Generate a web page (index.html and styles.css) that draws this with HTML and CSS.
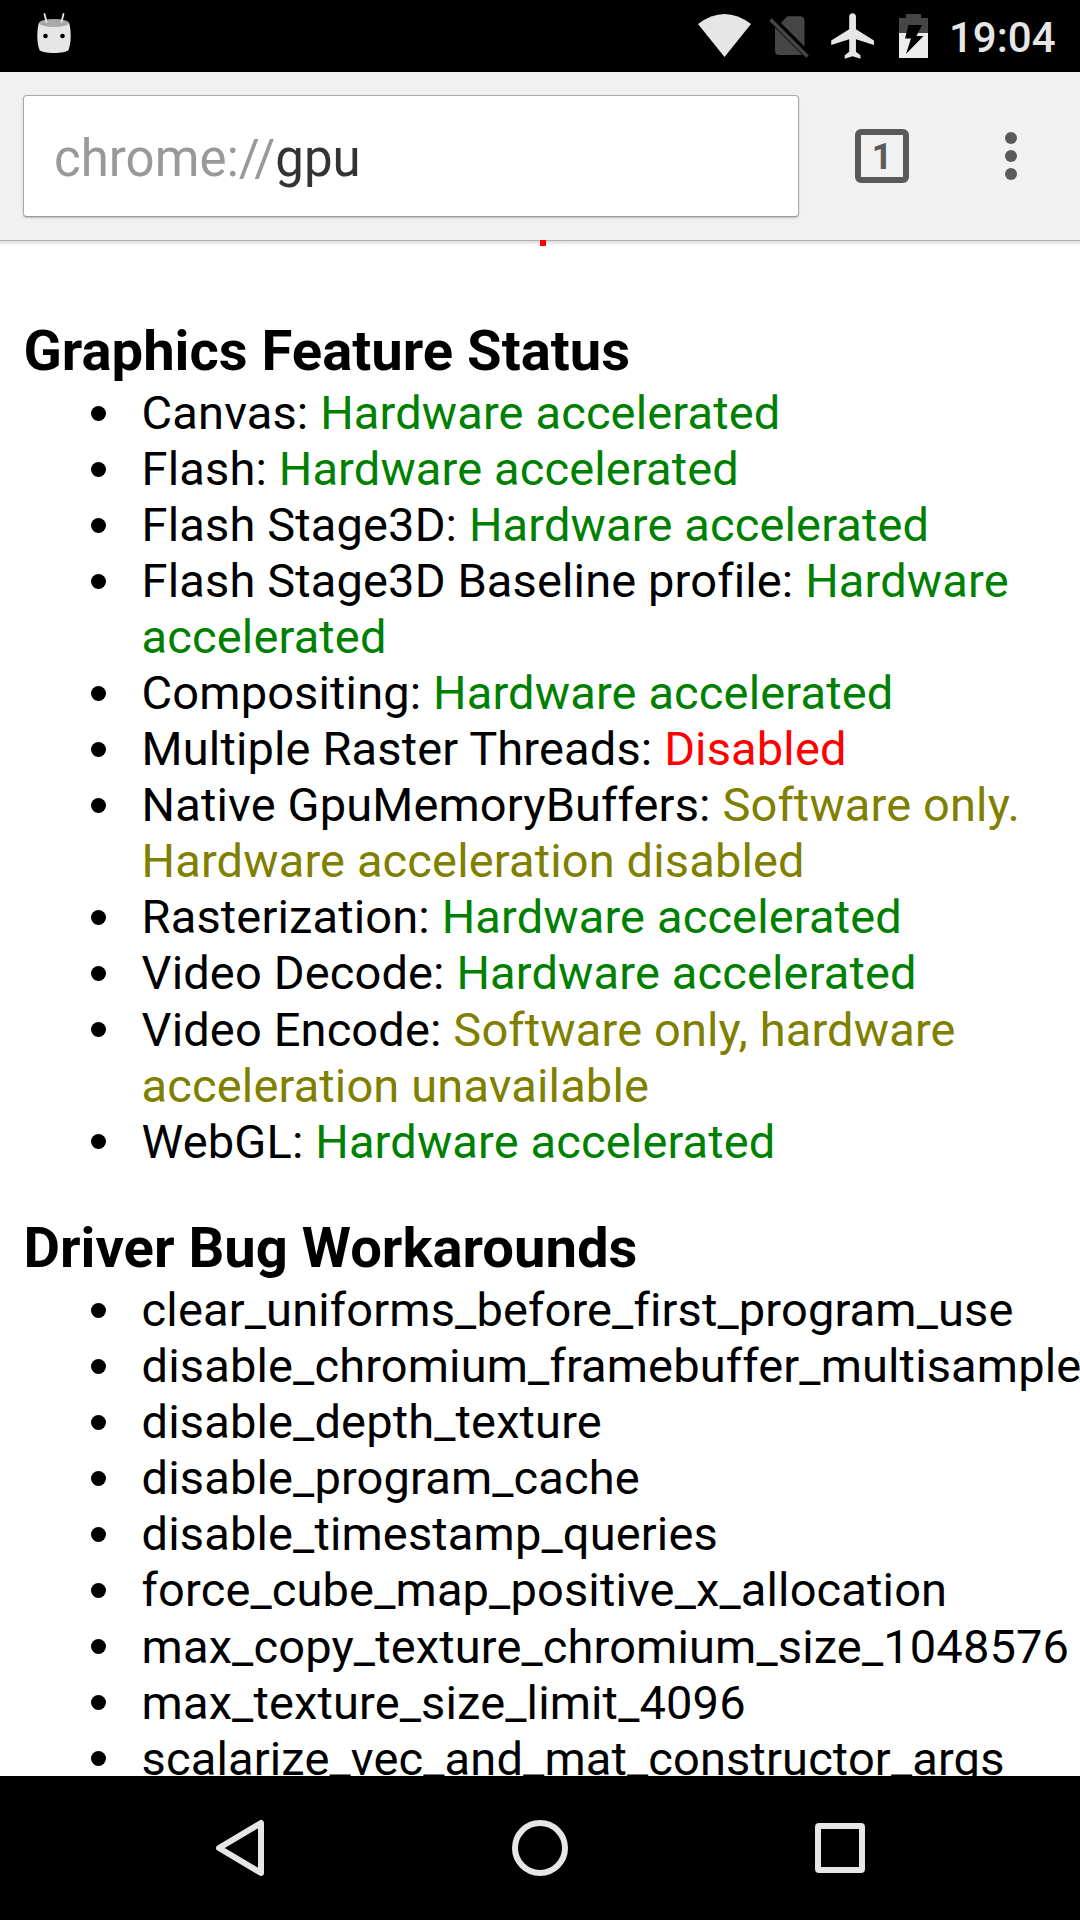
FILE: index.html
```html
<!DOCTYPE html>
<html lang="en">
<head>
<meta charset="utf-8">
<title>chrome://gpu</title>
<link rel="stylesheet" href="styles.css">
</head>
<body>
<div class="screen">
  <header class="status-bar">
    <svg class="droid" width="34" height="41" viewBox="0 0 34 41">
      <path d="M1.800 10 C-.300 18 -.300 30 2.500 37 C5 41 29 41 31.500 37 C34.300 30 34.300 18 32.200 10 Z" fill="#e6e6e6"/>
      <ellipse cx="17" cy="10" rx="15" ry="4" fill="#a8a8a8"/>
      <path d="M7.500 1 L9.500 9 M26.500 1 L24.500 9" stroke="#e6e6e6" stroke-width="1.800" stroke-linecap="round"/>
      <circle cx="8.500" cy="23" r="2.300"/><circle cx="25.500" cy="23" r="2.300"/>
    </svg>
    <svg class="system" width="268" height="72" viewBox="0 0 268 72">
      <path d="M18 24 Q44.500 4 71 24 L44.500 57 Z" fill="#e6e6e6"/>
      <path d="M101 23 L107 16.300 H120 Q124.500 16.300 124.500 21 V46.500 Z" fill="#464646"/>
      <path d="M95 27.500 L122 54.500 Q121 55 120 55 H99.500 Q95 55 95 50.500 Z" fill="#464646"/>
      <path d="M90.500 19.500 L127.500 56.500" stroke="#464646" stroke-width="3.600"/>
      <path transform="translate(146.700 8.700) scale(2.250 2.270)" fill="#e6e6e6" d="M21 16v-2l-8-5V3.500c0-.830-.670-1.500-1.500-1.500S10 2.670 10 3.500V9l-8 5v2l8-2.500V19l-2 1.500V22l3.500-1 3.500 1v-1.500L13 19v-5.500l8 2.500z"/>
      <path d="M219 33 V18 H226 V14 H241 V18 H248 V33 Z" fill="#464646"/>
      <path d="M219 33 H248 V58 H219 Z" fill="#ededed"/>
      <path d="M228.500 25 H242 L236.500 36 H243.500 L226 54 L231 38.500 H225 Z"/>
    </svg>
    <span class="clock">19:04</span>
  </header>
  <div class="toolbar">
    <div class="omnibox"><span class="scheme">chrome://</span>gpu</div>
    <div class="tabs">1</div>
    <svg class="menu" width="12" height="48" viewBox="0 0 12 48" fill="#5a5a5a"><circle cx="6" cy="6" r="6"/><circle cx="6" cy="24" r="6"/><circle cx="6" cy="42" r="6"/></svg>
  </div>
  <main class="page">
    <div class="loading-mark"></div>
    <h3>Graphics Feature Status</h3>
    <ul>
      <li>Canvas: <span class="on">Hardware accelerated</span></li>
      <li>Flash: <span class="on">Hardware accelerated</span></li>
      <li>Flash Stage3D: <span class="on">Hardware accelerated</span></li>
      <li>Flash Stage3D Baseline profile: <span class="on">Hardware accelerated</span></li>
      <li>Compositing: <span class="on">Hardware accelerated</span></li>
      <li>Multiple Raster Threads: <span class="off">Disabled</span></li>
      <li>Native GpuMemoryBuffers: <span class="soft">Software only. Hardware acceleration disabled</span></li>
      <li>Rasterization: <span class="on">Hardware accelerated</span></li>
      <li>Video Decode: <span class="on">Hardware accelerated</span></li>
      <li>Video Encode: <span class="soft">Software only, hardware acceleration unavailable</span></li>
      <li>WebGL: <span class="on">Hardware accelerated</span></li>
    </ul>
    <h3>Driver Bug Workarounds</h3>
    <ul class="workarounds">
      <li>clear_uniforms_before_first_program_use</li>
      <li>disable_chromium_framebuffer_multisample</li>
      <li>disable_depth_texture</li>
      <li>disable_program_cache</li>
      <li>disable_timestamp_queries</li>
      <li>force_cube_map_positive_x_allocation</li>
      <li>max_copy_texture_chromium_size_1048576</li>
      <li>max_texture_size_limit_4096</li>
      <li>scalarize_vec_and_mat_constructor_args</li>
    </ul>
  </main>
  <nav class="nav-bar">
    <svg width="60" height="60" viewBox="0 0 60 60"><path d="M51 5 V55 L9 30 Z"/></svg>
    <svg width="60" height="60" viewBox="0 0 60 60"><circle cx="30" cy="30" r="25"/></svg>
    <svg width="60" height="60" viewBox="0 0 60 60"><rect x="8" y="8" width="44" height="44" rx="1"/></svg>
  </nav>
</div>
</body>
</html>
```
FILE: styles.css
```css
body { margin: 0; font-family: Roboto, sans-serif; }
.screen { width: 1080px; height: 1920px; display: flex; flex-direction: column; overflow: hidden; background: #fff; }
.status-bar { height: 72px; flex: none; background: #000; display: flex; align-items: center; }
.droid { margin: -5px 0 0 37px; }
.system { margin-left: auto; }
.clock { width: 131px; margin: 2px 0 0 1px; color: #e6e6e6; font-size: 42px; font-weight: 500; white-space: nowrap; }
.toolbar { height: 168px; flex: none; box-sizing: border-box; background: #f1f1f1; display: flex; align-items: center; padding-left: 23px; }
.omnibox { width: 776px; height: 122px; box-sizing: border-box; border: 1px solid #aaa; border-bottom-color: #999; border-radius: 4px; background: #fff; padding-left: 30px; line-height: 126px; font-size: 51px; color: #333; box-shadow: 0 1px 2px rgba(0,0,0,.22); }
.scheme { color: #999; }
.tabs { width: 42px; height: 42px; border: 6px solid #5a5a5a; border-radius: 6px; margin-left: 56px; text-align: center; font: bold 36px/44px Roboto, sans-serif; color: #5a5a5a; }
.menu { margin-left: 96px; }
.page { flex: 1; min-height: 0; overflow: hidden; padding: 0 0 0 24px; font-size: 47px; letter-spacing: .14px; line-height: 56.05px; background: linear-gradient(#b0b0b0 0 1px, #dcdcdc 1px, #fff 6px); }
.loading-mark { width: 6px; height: 6px; margin-left: 516px; background: red; }
h3 { margin: 72px 0 0 -.5px; font-size: 56.2px; line-height: 67px; letter-spacing: 0; }
ul { margin: 0; padding: 0 24px 0 117.6px; list-style: none; }
li::before { content: ""; display: inline-block; width: 15px; height: 15px; margin: 0 35.4px 0 -50.4px; border-radius: 50%; background: #000; vertical-align: 8.5px; }
ul + h3 { margin-top: 45.6px; }
.workarounds { white-space: nowrap; }
.on { color: green; }
.off { color: red; }
.soft { color: olive; }
.nav-bar { height: 144px; flex: none; background: #000; display: flex; justify-content: center; align-items: center; gap: 240px; }
.nav-bar svg { fill: none; stroke: #e6e6e6; stroke-width: 6; stroke-linejoin: round; }
```
